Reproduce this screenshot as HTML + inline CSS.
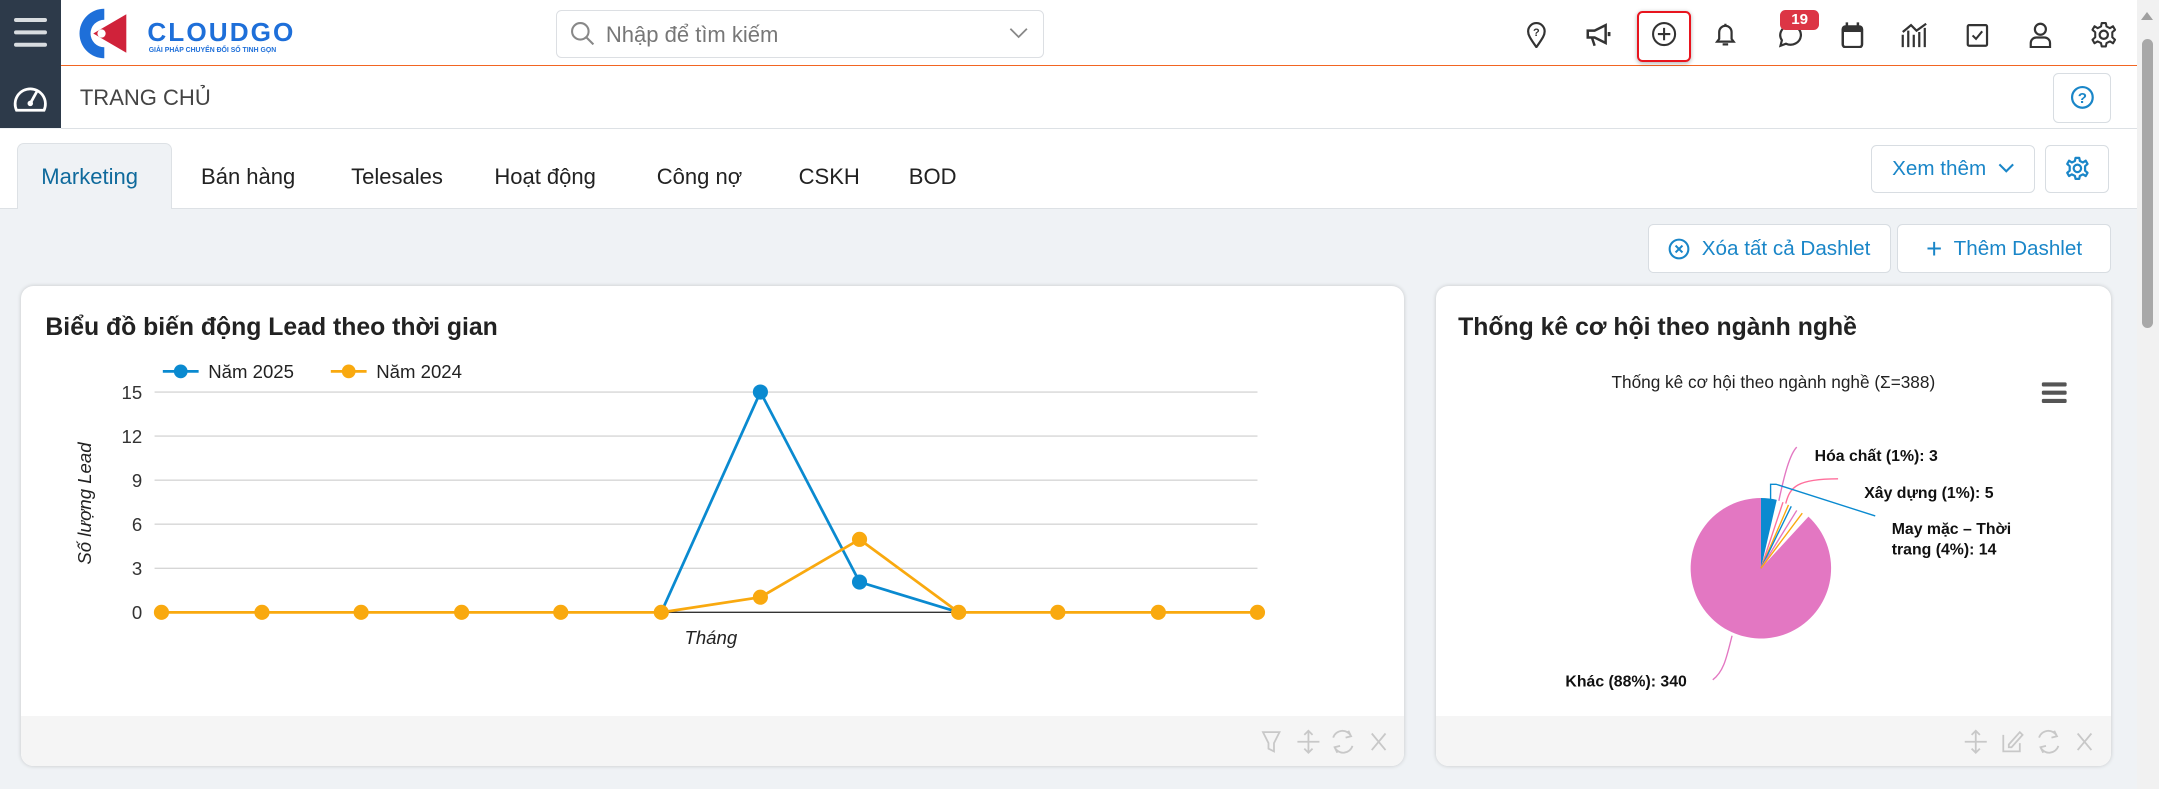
<!DOCTYPE html>
<html><head><meta charset="utf-8">
<style>
html,body{margin:0;padding:0;overflow:hidden}
body{width:1568px;height:573px;zoom:1.37692;font-family:"Liberation Sans",sans-serif;background:#eff2f5;position:relative;color:#333}
.abs{position:absolute}
.side{left:0;top:0;width:44px;height:93px;background:#2d3a4a}
.top{left:44px;top:0;width:1508px;height:47px;background:#fff;border-bottom:1.5px solid #f26522}
.row2{left:44px;top:48px;width:1508px;height:45px;background:#fff;border-bottom:1px solid #dde1e5}
.tabs{left:0;top:94px;width:1552px;height:57px;background:#fff;border-bottom:1px solid #dde1e5}
.tab{position:absolute;top:119px;font-size:16px;color:#222}
.btn{position:absolute;background:#fff;border:1px solid #d8dde2;border-radius:4px;color:#1a86c8;font-size:15px;box-sizing:border-box;display:flex;align-items:center;justify-content:center}
.card{position:absolute;background:#fff;border-radius:9px;box-shadow:0 0 3px rgba(0,0,0,.18);overflow:hidden}
.foot{position:absolute;left:0;right:0;bottom:0;height:36px;background:#f5f5f5}
.ico{position:absolute;top:15px}
</style></head><body>
<div class="abs side"></div>
<div class="abs" style="left:10px;top:13px;width:24px;height:3px;background:#d8dce0;border-radius:2px;box-shadow:0 9px 0 #d8dce0,0 18px 0 #d8dce0"></div>
<svg class="abs" style="left:8px;top:58px" width="28" height="26" viewBox="0 0 28 26"><path d="M4 22 A11 11 0 1 1 24 22 Z" fill="none" stroke="#fff" stroke-width="2"/><path d="M14 17 L19 8" stroke="#fff" stroke-width="2"/><circle cx="14" cy="17" r="2" fill="#fff"/></svg>
<div class="abs top"></div>
<div class="abs row2"></div>
<!-- logo -->
<svg class="abs" style="left:54px;top:4px" width="50" height="40" viewBox="0 0 50 40"><path d="M22 2 A18 18 0 1 0 22 38 L22 30 A10 10 0 1 1 22 10 Z" fill="#1e6fd9"/><path d="M14 20 L38 6 L38 34 Z" fill="#d0223a"/><circle cx="20" cy="20" r="3" fill="#fff"/></svg>
<div class="abs" style="left:107px;top:12px;font-size:19px;font-weight:bold;color:#1e6fd9;letter-spacing:1.5px">CLOUDGO</div>
<div class="abs" style="left:108px;top:34px;font-size:5px;color:#1e6fd9;font-weight:bold">GIẢI PHÁP CHUYỂN ĐỔI SỐ TINH GỌN</div>
<!-- search -->
<div class="abs" style="left:404px;top:7px;width:354px;height:35px;border:1px solid #dcdfe3;border-radius:4px;box-sizing:border-box;background:#fff"></div>
<svg class="abs" style="left:414px;top:15px" width="18" height="18" viewBox="0 0 18 18"><circle cx="7.5" cy="7.5" r="6" fill="none" stroke="#888" stroke-width="1.5"/><path d="M12 12 L17 17" stroke="#888" stroke-width="1.5"/></svg>
<div class="abs" style="left:440px;top:16px;font-size:16px;color:#777">Nhập để tìm kiếm</div>
<svg class="abs" style="left:733px;top:19px" width="14" height="10"><path d="M1 2 L7 8 L13 2" fill="none" stroke="#888" stroke-width="1.3"/></svg>
<!-- top icons -->
<svg class="ico" style="left:1107px" width="18" height="20" viewBox="0 0 18 20"><path d="M9 19 C4 12 3 10 3 7.5 A6 6 0 0 1 15 7.5 C15 10 14 12 9 19Z" fill="none" stroke="#333" stroke-width="1.6"/><text x="9" y="11" font-size="8" text-anchor="middle" fill="#333" font-weight="bold">?</text></svg>
<svg class="ico" style="left:1151px" width="20" height="20" viewBox="0 0 20 20"><path d="M2 7 H7 L15 3 V16 L7 12 H2 Z M5 12 L7 18" fill="none" stroke="#333" stroke-width="1.8"/><rect x="16.5" y="8" width="2" height="3" fill="#333"/></svg>
<div class="abs" style="left:1189px;top:8px;width:39px;height:37px;border:2px solid #e8141e;border-radius:4px;box-sizing:border-box;box-shadow:0 1px 3px rgba(0,0,0,.3)"></div>
<svg class="ico" style="left:1199px" width="19" height="19" viewBox="0 0 19 19"><circle cx="9.5" cy="9.5" r="8" fill="none" stroke="#333" stroke-width="1.5"/><path d="M9.5 5 V14 M5 9.5 H14" stroke="#333" stroke-width="1.5"/></svg>
<svg class="ico" style="left:1244px" width="18" height="20" viewBox="0 0 18 20"><path d="M3 15 H15 L13.5 13 V8 A4.5 4.5 0 0 0 4.5 8 V13 Z M7 17 H11" fill="none" stroke="#333" stroke-width="1.6"/><path d="M9 2 V3.5" stroke="#333" stroke-width="1.6"/></svg>
<svg class="ico" style="left:1289px" width="20" height="20" viewBox="0 0 20 20"><path d="M4 18 L5 14 A7.5 7 0 1 1 8 16.5 Z" fill="none" stroke="#333" stroke-width="1.6"/></svg>
<div class="abs" style="left:1293px;top:7px;width:28px;height:15px;background:#dc3545;border-radius:4px;color:#fff;font-size:11px;font-weight:bold;text-align:center;line-height:15px">19</div>
<svg class="ico" style="left:1336px" width="18" height="20" viewBox="0 0 18 20"><rect x="2" y="4" width="14" height="15" rx="2" fill="none" stroke="#333" stroke-width="1.8"/><rect x="2" y="4" width="14" height="4" fill="#333"/><path d="M5 1 V5 M13 1 V5" stroke="#333" stroke-width="1.8"/></svg>
<svg class="ico" style="left:1380px" width="22" height="20" viewBox="0 0 22 20"><path d="M2 19 V10 M6 19 V7 M10 19 V10 M14 19 V8 M18 19 V5 M2 8 L8 3 L12 7 L19 2" fill="none" stroke="#333" stroke-width="1.6"/></svg>
<svg class="ico" style="left:1427px" width="18" height="20" viewBox="0 0 18 20"><rect x="2" y="3" width="14" height="15" rx="1" fill="none" stroke="#333" stroke-width="1.6"/><path d="M5.5 10.5 L8 13 L12.5 7.5" fill="none" stroke="#333" stroke-width="1.5"/></svg>
<svg class="ico" style="left:1473px" width="18" height="20" viewBox="0 0 18 20"><circle cx="9" cy="6" r="4" fill="none" stroke="#333" stroke-width="1.6"/><path d="M2 19 V16 A4 4 0 0 1 6 12 H12 A4 4 0 0 1 16 16 V19 Z" fill="none" stroke="#333" stroke-width="1.6"/></svg>
<svg class="ico" style="left:1518px" width="20" height="20" viewBox="0 0 20 20"><circle cx="10" cy="10" r="3" fill="none" stroke="#333" stroke-width="1.6"/><path d="M8.5 1.5 H11.5 L12 4 L14.5 5.2 L16.7 3.8 L18.2 6.4 L16.2 8.2 V11.8 L18.2 13.6 L16.7 16.2 L14.5 14.8 L12 16 L11.5 18.5 H8.5 L8 16 L5.5 14.8 L3.3 16.2 L1.8 13.6 L3.8 11.8 V8.2 L1.8 6.4 L3.3 3.8 L5.5 5.2 L8 4 Z" fill="none" stroke="#333" stroke-width="1.5" stroke-linejoin="round"/></svg>
<!-- scrollbar -->
<div class="abs" style="left:1552px;top:0;width:16px;height:573px;background:#f1f1f1"></div>
<div class="abs" style="left:1556px;top:28px;width:8px;height:210px;background:#a8a8a8;border-radius:4px"></div>
<div class="abs" style="left:1555px;top:9px;width:0;height:0;border-left:5px solid transparent;border-right:5px solid transparent;border-bottom:6px solid #a0a0a0"></div>
<!-- row2 -->
<div class="abs" style="left:58px;top:62px;font-size:16px;color:#444">TRANG CHỦ</div>
<div class="btn" style="left:1491px;top:53px;width:42px;height:36px"><svg width="18" height="18" viewBox="0 0 18 18"><circle cx="9" cy="9" r="7.5" fill="none" stroke="#1a86c8" stroke-width="1.6"/><text x="9" y="13" font-size="11" font-weight="bold" text-anchor="middle" fill="#1a86c8">?</text></svg></div>
<!-- tabs -->
<div class="abs tabs"></div>
<div class="abs" style="left:12px;top:104px;width:113px;height:48px;background:#eff2f5;border:1px solid #dde1e5;border-bottom:none;border-radius:5px 5px 0 0;box-sizing:border-box"></div>
<div class="tab" style="left:30px;color:#0f6a9c">Marketing</div>
<div class="tab" style="left:146px">Bán hàng</div>
<div class="tab" style="left:255px">Telesales</div>
<div class="tab" style="left:359px">Hoạt động</div>
<div class="tab" style="left:477px">Công nợ</div>
<div class="tab" style="left:580px">CSKH</div>
<div class="tab" style="left:660px">BOD</div>
<div class="btn" style="left:1359px;top:105px;width:119px;height:35px">Xem thêm&nbsp;&nbsp;<svg width="12" height="8"><path d="M1 1 L6 6 L11 1" fill="none" stroke="#1a86c8" stroke-width="1.5"/></svg></div>
<div class="btn" style="left:1485px;top:105px;width:47px;height:35px"><svg width="18" height="18" viewBox="0 0 20 20"><circle cx="10" cy="10" r="3" fill="none" stroke="#1a86c8" stroke-width="1.8"/><path d="M8.5 1.5 H11.5 L12 4 L14.5 5.2 L16.7 3.8 L18.2 6.4 L16.2 8.2 V11.8 L18.2 13.6 L16.7 16.2 L14.5 14.8 L12 16 L11.5 18.5 H8.5 L8 16 L5.5 14.8 L3.3 16.2 L1.8 13.6 L3.8 11.8 V8.2 L1.8 6.4 L3.3 3.8 L5.5 5.2 L8 4 Z" fill="none" stroke="#1a86c8" stroke-width="1.8" stroke-linejoin="round"/></svg></div>
<div class="btn" style="left:1197px;top:163px;width:176px;height:35px"><svg width="16" height="16" viewBox="0 0 16 16"><circle cx="8" cy="8" r="6.8" fill="none" stroke="#1a86c8" stroke-width="1.5"/><path d="M5.5 5.5 L10.5 10.5 M10.5 5.5 L5.5 10.5" stroke="#1a86c8" stroke-width="1.5"/></svg>&nbsp;&nbsp;Xóa tất cả Dashlet</div>
<div class="btn" style="left:1378px;top:163px;width:155px;height:35px"><span style="font-size:20px">+</span>&nbsp;&nbsp;Thêm Dashlet</div>
<!-- card 1 -->
<div class="card" style="left:15px;top:208px;width:1005px;height:348px">
 <div class="foot"></div>
 <div class="abs" style="left:18px;top:20px;font-size:18px;font-weight:bold;color:#222">Biểu đồ biến động Lead theo thời gian</div>
</div>
<svg class="abs" style="left:15px;top:208px" width="1005" height="348">
 <g transform="translate(-15,-208)" font-family="Liberation Sans" >
  <g stroke="#d6d6d6" stroke-width="1">
   <line x1="112" y1="285" x2="913" y2="285"/><line x1="112" y1="317" x2="913" y2="317"/><line x1="112" y1="349" x2="913" y2="349"/><line x1="112" y1="381" x2="913" y2="381"/><line x1="112" y1="413" x2="913" y2="413"/>
  </g>
  <line x1="112" y1="445" x2="913" y2="445" stroke="#333"/>
  <g font-size="13.5" fill="#333" text-anchor="end">
   <text x="103" y="290">15</text><text x="103" y="322">12</text><text x="103" y="354">9</text><text x="103" y="386">6</text><text x="103" y="418">3</text><text x="103" y="450">0</text>
  </g>
  <text transform="translate(66,366) rotate(-90)" font-size="13.5" font-style="italic" text-anchor="middle" fill="#222">Số lượng Lead</text>
  <text x="516" y="468" font-size="13.5" font-style="italic" text-anchor="middle" fill="#222">Tháng</text>
  <line x1="118" y1="270" x2="144" y2="270" stroke="#0a8ad0" stroke-width="2"/><circle cx="131" cy="270" r="5" fill="#0a8ad0"/>
  <text x="151" y="275" font-size="13.5" fill="#222">Năm 2025</text>
  <line x1="240" y1="270" x2="266" y2="270" stroke="#f9a90f" stroke-width="2"/><circle cx="253" cy="270" r="5" fill="#f9a90f"/>
  <text x="273" y="275" font-size="13.5" fill="#222">Năm 2024</text>
  <polyline points="480,445 552,285 624,423 696,445" fill="none" stroke="#0a8ad0" stroke-width="2"/>
  <circle cx="552" cy="285" r="5.5" fill="#0a8ad0"/><circle cx="624" cy="423" r="5.5" fill="#0a8ad0"/>
  <polyline points="117,445 480,445 552,434 624,392 696,445 913,445" fill="none" stroke="#f9a90f" stroke-width="2"/>
  <g fill="#f9a90f"><circle cx="117" cy="445" r="5.5"/><circle cx="190" cy="445" r="5.5"/><circle cx="262" cy="445" r="5.5"/><circle cx="335" cy="445" r="5.5"/><circle cx="407" cy="445" r="5.5"/><circle cx="480" cy="445" r="5.5"/><circle cx="552" cy="434" r="5.5"/><circle cx="624" cy="392" r="5.5"/><circle cx="696" cy="445" r="5.5"/><circle cx="768" cy="445" r="5.5"/><circle cx="841" cy="445" r="5.5"/><circle cx="913" cy="445" r="5.5"/></g>
  <g fill="none" stroke="#c8c8c8" stroke-width="1.3">
   <path d="M917 532 L929 532 L925 540 V546 L921 544 V540 Z"/>
   <path d="M950 531 V547 M942 539 H958 M947 534 L950 531 L953 534 M947 544 L950 547 L953 544"/>
   <path d="M968 536 A7 7 0 0 1 981 535 M982 542 A7 7 0 0 1 969 543 M979 531 L981 535 L977 536 M971 547 L969 543 L973 542"/>
   <path d="M996 533 L1006 545 M1006 533 L996 545"/>
  </g>
 </g>
</svg>
<!-- card 2 -->
<div class="card" style="left:1043px;top:208px;width:490px;height:348px">
 <div class="foot"></div>
 <div class="abs" style="left:16px;top:20px;font-size:18px;font-weight:bold;color:#222">Thống kê cơ hội theo ngành nghề</div>
</div>
<svg class="abs" style="left:1043px;top:208px" width="490" height="348">
 <g transform="translate(-1043,-208)" font-family="Liberation Sans">
  <text x="1288" y="282" font-size="12.5" text-anchor="middle" fill="#222">Thống kê cơ hội theo ngành nghề (Σ=388)</text>
  <g fill="#555"><rect x="1483" y="278" width="18" height="3" rx="1"/><rect x="1483" y="284" width="18" height="3" rx="1"/><rect x="1483" y="290" width="18" height="3" rx="1"/></g>
  <path d="M1279 413 L1313.5 375.5 A51 51 0 1 1 1279 362 Z" fill="#e377c2"/>
  <path d="M1279 413 L1279 362 A51 51 0 0 1 1290.5 363.3 Z" fill="#0a8ad0"/>
  <g stroke-width="1">
   <line x1="1279" y1="413" x2="1295" y2="365" stroke="#ff6f9c"/>
   <line x1="1279" y1="413" x2="1299" y2="367" stroke="#f9a90f"/>
   <line x1="1279" y1="413" x2="1301" y2="368" stroke="#0a8ad0"/>
   <line x1="1279" y1="413" x2="1305" y2="371" stroke="#e377c2"/>
   <line x1="1279" y1="413" x2="1309" y2="373" stroke="#f9a90f"/>
  </g>
  <path d="M1292 364 C1296 345 1300 330 1305 325" fill="none" stroke="#e377c2"/>
  <path d="M1297 366 C1300 354 1305 348 1335 348" fill="none" stroke="#ff6f9c"/>
  <path d="M1286 363 L1286 352 L1290 352 L1362 375" fill="none" stroke="#0a8ad0"/>
  <path d="M1258 462 C1254 478 1252 488 1244 494" fill="none" stroke="#e377c2"/>
  <g font-size="11.5" font-weight="bold" fill="#111">
   <text x="1318" y="335">Hóa chất (1%): 3</text>
   <text x="1354" y="362">Xây dựng (1%): 5</text>
   <text x="1374" y="388">May mặc – Thời</text>
   <text x="1374" y="403">trang (4%): 14</text>
   <text x="1137" y="499">Khác (88%): 340</text>
  </g>
  <g fill="none" stroke="#c8c8c8" stroke-width="1.3">
   <path d="M1435 531 V547 M1427 539 H1443 M1432 534 L1435 531 L1438 534 M1432 544 L1435 547 L1438 544"/>
   <path d="M1455 534 V546 H1467 V540 M1459 541 L1467 532 L1469 534 L1461 543 H1459 Z"/>
   <path d="M1481 536 A7 7 0 0 1 1494 535 M1495 542 A7 7 0 0 1 1482 543 M1492 531 L1494 535 L1490 536 M1484 547 L1482 543 L1486 542"/>
   <path d="M1509 533 L1519 545 M1519 533 L1509 545"/>
  </g>
 </g>
</svg>
</body></html>
